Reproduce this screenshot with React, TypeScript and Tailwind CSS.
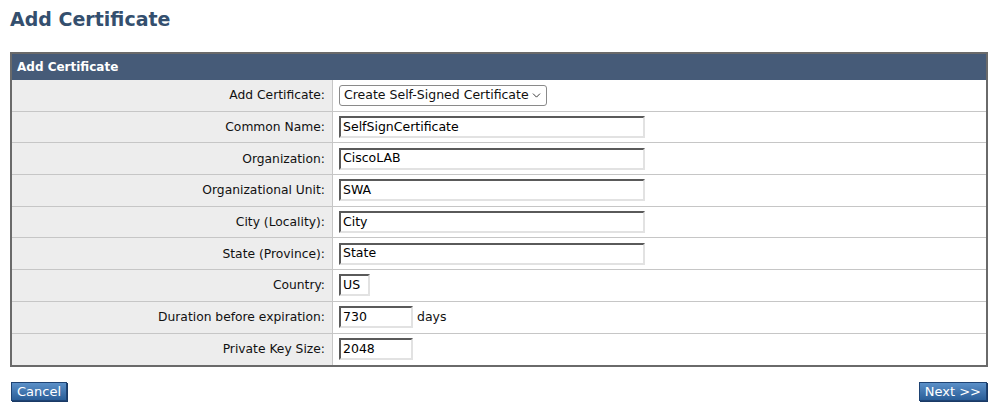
import { ChevronDown } from "lucide-react";

const FONT = { fontFamily: '"DejaVu Sans", Verdana, sans-serif' };

type Row = { label: string; value?: string; width?: string; suffix?: string; select?: boolean };

const ROWS: Row[] = [
  { label: "Add Certificate:", select: true },
  { label: "Common Name:", value: "SelfSignCertificate", width: "w-[306px]" },
  { label: "Organization:", value: "CiscoLAB", width: "w-[306px]" },
  { label: "Organizational Unit:", value: "SWA", width: "w-[306px]" },
  { label: "City (Locality):", value: "City", width: "w-[306px]" },
  { label: "State (Province):", value: "State", width: "w-[306px]" },
  { label: "Country:", value: "US", width: "w-[31px]" },
  { label: "Duration before expiration:", value: "730", width: "w-[74px]", suffix: "days" },
  { label: "Private Key Size:", value: "2048", width: "w-[74px]" },
];

function TextBox({ value, width }: { value: string; width: string }) {
  return (
    <div
      className={`${width} flex h-[22px] items-center border-2 border-t-[#5a5a5a] border-l-[#5a5a5a] border-r-[#e2e2e2] border-b-[#e2e2e2] bg-white pl-[2px] text-[12.5px] text-black`}
    >
      {value}
    </div>
  );
}

function Button({ children }: { children: React.ReactNode }) {
  return (
    <button className="h-[19px] border border-[#1e4373] bg-gradient-to-b from-[#5b90c8] to-[#2a5e98] px-[5px] text-[13px] leading-[17px] text-white shadow-[1px_1px_0_#1a3a66]">
      {children}
    </button>
  );
}

export default function App() {
  return (
    <div className="h-[410px] w-[999px] bg-white" style={FONT}>
      <h1 className="pl-[10px] pt-[6px] text-[19px] font-bold leading-[26px] text-[#344f6e]">Add Certificate</h1>

      <div className="ml-[10px] mt-[20px] w-[978px] border-2 border-[#6a6a6a]">
        <div className="flex h-[26px] items-center bg-[#465b78] pl-[5px] text-[12px] font-bold text-white">
          Add Certificate
        </div>
        {ROWS.map((r, i) => (
          <div
            key={r.label}
            className={`grid h-[31.7px] grid-cols-[321px_1fr] ${i < ROWS.length - 1 ? "border-b border-[#c6c6c6]" : ""}`}
          >
            <div className="flex items-center justify-end border-r border-[#c6c6c6] bg-[#ededed] pr-[7px] text-[12.3px] text-[#111]">
              {r.label}
            </div>
            <div className="flex items-center gap-[4px] pl-[6px] text-[12.5px] text-[#111]">
              {r.select ? (
                <div className="flex h-[21px] w-[208px] items-center justify-between rounded-[3px] border border-[#8a8a8a] bg-white pl-[4px] pr-[3px]">
                  <span>Create Self-Signed Certificate</span>
                  <ChevronDown size={13} strokeWidth={1.5} />
                </div>
              ) : (
                <TextBox value={r.value!} width={r.width!} />
              )}
              {r.suffix && <span>{r.suffix}</span>}
            </div>
          </div>
        ))}
      </div>

      <div className="mt-[15px] flex justify-between pl-[11px] pr-[12px]">
        <Button>Cancel</Button>
        <Button>Next &gt;&gt;</Button>
      </div>
    </div>
  );
}
